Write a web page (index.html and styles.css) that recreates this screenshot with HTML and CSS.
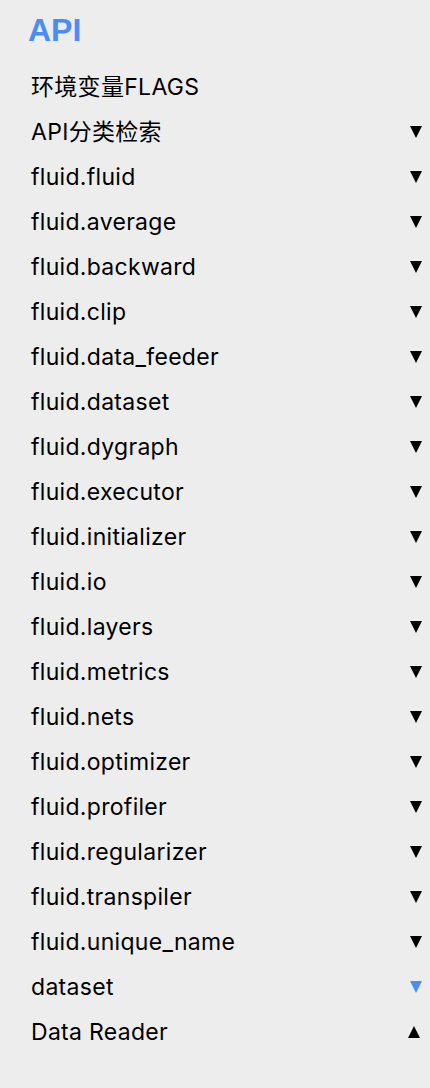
FILE: index.html
```html
<!DOCTYPE html>
<html lang="zh">
<head>
<meta charset="utf-8">
<link rel="stylesheet" href="styles.css">
</head>
<body>
<nav class="sidebar">
  <h1 class="title">API</h1>
  <ul class="menu">
    <li class="item"><span class="label">环境变量FLAGS</span></li>
    <li class="item"><span class="label">API分类检索</span><span class="arrow down"></span></li>
    <li class="item"><span class="label">fluid.fluid</span><span class="arrow down"></span></li>
    <li class="item"><span class="label">fluid.average</span><span class="arrow down"></span></li>
    <li class="item"><span class="label">fluid.backward</span><span class="arrow down"></span></li>
    <li class="item"><span class="label">fluid.clip</span><span class="arrow down"></span></li>
    <li class="item"><span class="label">fluid.data_feeder</span><span class="arrow down"></span></li>
    <li class="item"><span class="label">fluid.dataset</span><span class="arrow down"></span></li>
    <li class="item"><span class="label">fluid.dygraph</span><span class="arrow down"></span></li>
    <li class="item"><span class="label">fluid.executor</span><span class="arrow down"></span></li>
    <li class="item"><span class="label">fluid.initializer</span><span class="arrow down"></span></li>
    <li class="item"><span class="label">fluid.io</span><span class="arrow down"></span></li>
    <li class="item"><span class="label">fluid.layers</span><span class="arrow down"></span></li>
    <li class="item"><span class="label">fluid.metrics</span><span class="arrow down"></span></li>
    <li class="item"><span class="label">fluid.nets</span><span class="arrow down"></span></li>
    <li class="item"><span class="label">fluid.optimizer</span><span class="arrow down"></span></li>
    <li class="item"><span class="label">fluid.profiler</span><span class="arrow down"></span></li>
    <li class="item"><span class="label">fluid.regularizer</span><span class="arrow down"></span></li>
    <li class="item"><span class="label">fluid.transpiler</span><span class="arrow down"></span></li>
    <li class="item"><span class="label">fluid.unique_name</span><span class="arrow down"></span></li>
    <li class="item"><span class="label">dataset</span><span class="arrow down blue"></span></li>
    <li class="item"><span class="label">Data Reader</span><span class="arrow up"></span></li>
  </ul>
</nav>
</body>
</html>
```
FILE: styles.css
```css
html, body {
  margin: 0;
  padding: 0;
  background: #ededed;
}
body {
  font-family: Inter, "Liberation Sans", "Noto Sans CJK SC", sans-serif;
  color: #000;
  width: 430px;
  height: 1088px;
  overflow: hidden;
}
.sidebar {
  padding: 8px 8px 0 31px;
}
.title {
  margin: 0 0 0 -3px;
  font-family: "Liberation Sans", Arial, sans-serif;
  font-size: 32px;
  font-weight: bold;
  color: #4a8ef5;
  line-height: 44px;
  height: 56px;
}
.menu {
  list-style: none;
  margin: 0;
  padding: 0;
}
.item {
  display: flex;
  align-items: center;
  justify-content: space-between;
  height: 45px;
  font-size: 23px;
  letter-spacing: 0.3px;
}
.label {
  line-height: 26px;
}
.arrow {
  width: 0;
  height: 0;
  border-left: 6.5px solid transparent;
  border-right: 6.5px solid transparent;
}
.arrow.down {
  border-top: 12px solid #000;
}
.arrow.down.blue {
  border-top-color: #4a8ef5;
}
.arrow.up {
  border-bottom: 12px solid #000;
  margin-right: 2px;
}
```
